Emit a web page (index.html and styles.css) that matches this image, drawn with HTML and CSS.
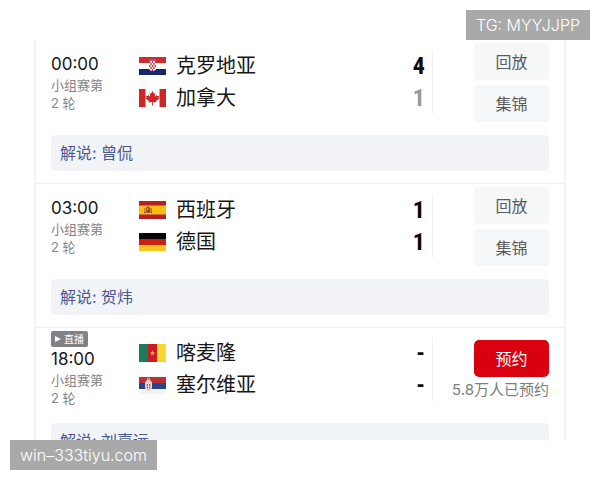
FILE: index.html
```
<!DOCTYPE html>
<html lang="zh-CN">
<head>
<meta charset="utf-8">
<meta name="viewport" content="width=device-width, initial-scale=1">
<title>小组赛赛程</title>
<link rel="stylesheet" href="styles.css">
</head>
<body>
<main class="schedule">
  <article class="match">
    <div class="match-main">
      <div class="when">
        <time class="kickoff">00:00</time>
        <span class="round">小组赛第 2 轮</span>
      </div>
      <div class="teams">
        <div class="team">
          <svg class="flag" viewBox="0 0 27 18" aria-hidden="true">
            <path fill="#fff" d="M0 0h27v18H0z"/><path fill="#d3292c" d="M0 0h27v6H0z"/><path fill="#14286c" d="M0 12h27v6H0z"/>
            <path fill="#fff" d="M10 4h7v7q0 3-3.500 3T10 11z"/>
            <path fill="#d8363b" d="M10 4h1.400v2H10zm2.800 0h1.400v2h-1.400zm2.800 0H17v2h-1.400zM11.400 6h1.400v2h-1.400zm2.800 0h1.400v2h-1.400zM10 8h1.400v2H10zm2.800 0h1.400v2h-1.400zm2.800 0H17v2h-1.400zM11.400 10h1.400v2h-1.400zm2.800 0h1.400v2h-1.400zM12.800 12h1.400v2h-1.400z"/>
            <path fill="#7d6b9b" d="M10 4l-.5-2 1.500.7L12.300 1.500l1.200.7 1.200-.7L16 2.700l1.500-.7L17 4z"/>
          </svg>
          <span class="name">克罗地亚</span><span class="score">4</span>
        </div>
        <div class="team">
          <svg class="flag" viewBox="0 0 27 18" aria-hidden="true">
            <path fill="#fff" d="M0 0h27v18H0z"/><path fill="#ce2529" d="M0 0h6.500v18H0zM20.500 0H27v18h-6.500z"/>
            <path fill="#ce2529" d="M13.500 2l-1.500 2.700-1.500-.6.700 3.700-2-1.900-.4 1.200-2-.3.800 2.100-.9.600 3.500 2.800-.4 1.100 3.300-.5-.1 3.600h1l-.1-3.600 3.300.5-.4-1.100 3.500-2.800-.9-.6.800-2.100-2 .3-.4-1.200-2 1.900.7-3.700-1.500.6z"/>
          </svg>
          <span class="name">加拿大</span><span class="score score-lost">1</span>
        </div>
      </div>
      <div class="actions">
        <button class="btn" type="button">回放</button>
        <button class="btn" type="button">集锦</button>
      </div>
    </div>
    <p class="commentary">解说: 曾侃</p>
  </article>

  <article class="match">
    <div class="match-main">
      <div class="when">
        <time class="kickoff">03:00</time>
        <span class="round">小组赛第 2 轮</span>
      </div>
      <div class="teams">
        <div class="team">
          <svg class="flag" viewBox="0 0 27 18" aria-hidden="true">
            <path fill="#b91f21" d="M0 0h27v18H0z"/><path fill="#fabd16" d="M0 4.500h27v9H0z"/>
            <path fill="#a64a20" d="M7 7l1-1.200L9 5.200l1.200.6 1 1.200v3.500q0 1.500-2.100 1.500T7 10.500zM5.500 7h.8v4.500h-.8zM11.800 7h.8v4.500h-.8z"/>
            <path fill="#f2c38a" d="M8 7.500h1.200V9H8z"/><path fill="#4b3b32" d="M9 9h1.500v1.500H9zM5 11.300h1.800v.8H5zM11.300 11.300h1.800v.8h-1.800z"/>
          </svg>
          <span class="name">西班牙</span><span class="score">1</span>
        </div>
        <div class="team">
          <svg class="flag" viewBox="0 0 27 18" aria-hidden="true">
            <path fill="#080405" d="M0 0h27v6H0z"/><path fill="#c9200f" d="M0 6h27v6H0z"/><path fill="#f9c41c" d="M0 12h27v6H0z"/>
          </svg>
          <span class="name">德国</span><span class="score">1</span>
        </div>
      </div>
      <div class="actions">
        <button class="btn" type="button">回放</button>
        <button class="btn" type="button">集锦</button>
      </div>
    </div>
    <p class="commentary">解说: 贺炜</p>
  </article>

  <article class="match match-live">
    <div class="match-main">
      <div class="when">
        <span class="live"><svg class="play" viewBox="0 0 6 6" aria-hidden="true"><path fill="#fff" d="M0 0l6 3-6 3z"/></svg>直播</span>
        <time class="kickoff">18:00</time>
        <span class="round">小组赛第 2 轮</span>
      </div>
      <div class="teams">
        <div class="team">
          <svg class="flag" viewBox="0 0 27 18" aria-hidden="true">
            <path fill="#187c5c" d="M0 0h9v18H0z"/><path fill="#c91c25" d="M9 0h9v18H9z"/><path fill="#fad52d" d="M18 0h9v18h-9z"/>
            <path fill="#f6a34a" d="M13.500 6.300l.7 2h2.100l-1.700 1.200.7 2-1.800-1.200-1.800 1.200.7-2-1.700-1.200h2.100z"/>
          </svg>
          <span class="name">喀麦隆</span><span class="score">-</span>
        </div>
        <div class="team">
          <svg class="flag" viewBox="0 0 27 18" aria-hidden="true">
            <path fill="#f4f2f4" d="M0 0h27v18H0z"/><path fill="#bb3037" d="M0 1h27v6H0z"/><path fill="#24468c" d="M0 7h27v6H0z"/>
            <path fill="#e7d5d5" d="M6 6l1.500-1L8 2.500l1.500-1 1.500 1L11.500 5 13 6v6l-2 3H8l-2-3z"/>
            <path fill="#b93d43" d="M7.800 8h3.400v3.500l-1.700 2-1.700-2z"/><path fill="#fff" d="M9.100 8h.8v5h-.8zM7.800 9.800h3.400v.8H7.800z"/>
            <path fill="#b58c5a" d="M8.300 4l.2-1.500 1-.7 1 .7.200 1.500z"/>
          </svg>
          <span class="name">塞尔维亚</span><span class="score">-</span>
        </div>
      </div>
      <div class="actions">
        <button class="btn btn-primary" type="button">预约</button>
        <span class="booked">5.8万人已预约</span>
      </div>
    </div>
    <p class="commentary">解说: 刘嘉远</p>
  </article>
</main>
<div class="tag tag-top">TG: MYYJJPP</div>
<div class="tag tag-bottom">win–333tiyu.com</div>
</body>
</html>
```
FILE: styles.css
```
* {
  box-sizing: border-box;
}

body {
  position: relative;
  display: flex;
  height: 100vh;
  margin: 0;
  padding: 40px 34px;
  background: #fff;
  color: #161616;
  font-family: Inter, "Noto Sans CJK SC", sans-serif;
}

.schedule {
  flex: 1;
  min-width: 0;
  overflow: hidden;
  border: solid #f2f4f5;
  border-width: 0 2px;
}

.match {
  padding: 0 15px 12px;
  border-bottom: 1px solid #f0f2f3;
}

.match-main {
  display: flex;
  align-items: flex-start;
  min-height: 95px;
}

.when {
  display: flex;
  flex-direction: column;
  align-items: flex-start;
  width: 88px;
  padding-top: 12px;
}

.kickoff {
  font-size: 17px;
  line-height: 24px;
}

.round {
  width: 56px;
  color: #858585;
  font-size: 13px;
  line-height: 18px;
}

.live {
  display: flex;
  align-items: center;
  gap: 3px;
  padding: 0 4px;
  border-radius: 2px;
  background: #808286;
  color: #fff;
  font-size: 10px;
  line-height: 16px;
}

.play {
  width: 6px;
  height: 6px;
}

.teams {
  flex: 1;
  margin-top: 10px;
  border-right: 1px solid #f0f1f2;
}

.team {
  display: flex;
  align-items: center;
  height: 32px;
  padding-right: 7px;
}

.flag {
  width: 27px;
  height: 18px;
  margin-right: 10px;
}

.name {
  flex: 1;
  font-size: 20px;
  line-height: 32px;
}

.score {
  color: #0a0a0a;
  font-family: "Roboto Condensed", Roboto, sans-serif;
  font-size: 24px;
  font-weight: 700;
  line-height: 32px;
}

.score-lost {
  color: #999;
}

.actions {
  display: flex;
  flex-direction: column;
  align-items: flex-end;
  gap: 5px;
  width: 116px;
  padding-top: 3px;
}

.btn {
  width: 75px;
  height: 37px;
  padding: 0 0 2px;
  border: 0;
  border-radius: 3px;
  background: #f6f7f8;
  color: #5a5b5d;
  font: inherit;
  font-size: 16px;
}

.btn-primary {
  border-radius: 5px;
  background: #d9000f;
  color: #fff;
}

.booked {
  color: #7c7c7c;
  font-size: 15px;
  line-height: 16px;
  white-space: nowrap;
}

.match-live .when {
  padding-top: 3px;
}

.match-live .teams {
  margin-top: 9px;
}

.match-live .actions {
  padding-top: 12px;
}

.commentary {
  margin: 0;
  padding: 0 9px;
  border-radius: 5px;
  background: #f1f3f7;
  color: #4c5a94;
  font-size: 16px;
  line-height: 36px;
}

.tag {
  position: absolute;
  padding: 0 10px;
  background: #a9a9a9;
  color: #fff;
  font-size: 16px;
  font-weight: 300;
  line-height: 30px;
}

.tag-top {
  top: 10px;
  right: 10px;
}

.tag-bottom {
  bottom: 10px;
  left: 10px;
}
```
